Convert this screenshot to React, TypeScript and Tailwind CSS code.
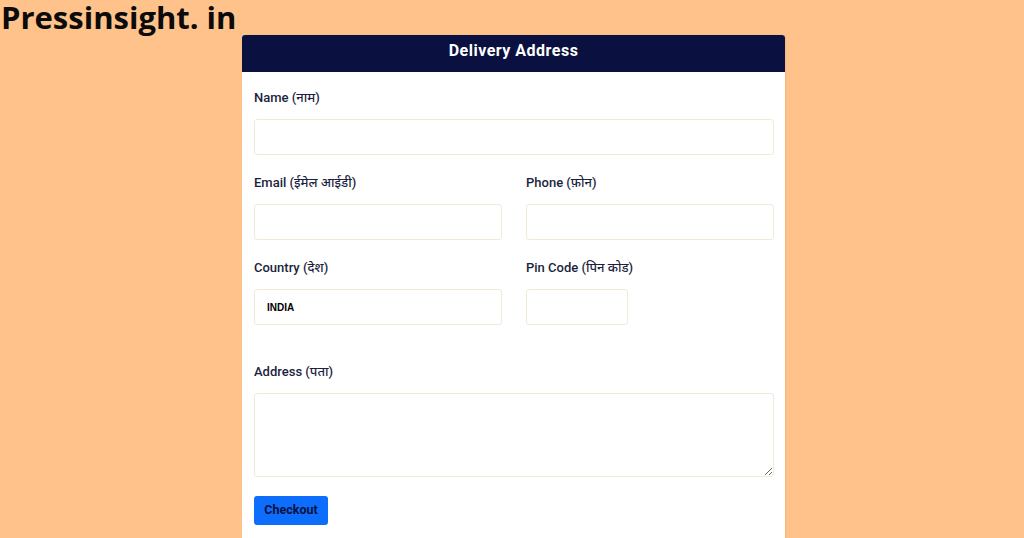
import React from "react";

const labelCls =
  "block h-5 leading-5 text-[13px] font-medium text-[#1c1f3d] font-['Roboto','Noto_Sans',sans-serif]";
const inputCls =
  "block h-9 w-full rounded-[3px] border border-[#f3ead6] bg-white px-3 outline-none";

const Field: React.FC<{ label: string; className?: string; children: React.ReactNode }> = ({
  label,
  className,
  children,
}) => (
  <div className={className}>
    <label className={labelCls}>{label}</label>
    <div className="mt-[11px]">{children}</div>
  </div>
);

const App: React.FC = () => {
  return (
    <div className="min-h-screen bg-[#ffc28a] overflow-hidden">
      <div className="h-[35px] pl-[1px] text-[31px] leading-[34px] font-bold text-[#0b0b0b] font-['Open_Sans',sans-serif] whitespace-nowrap">
        Pressinsight. in
      </div>

      <div className="ml-[242px] w-[543px] bg-white rounded-t-[3px] shadow-[1px_0_2px_rgba(0,0,0,0.06)] h-[510px]">
        <div className="h-[37px] pb-[5px] bg-[#0a1140] rounded-t-[3px] flex items-center justify-center text-white text-[16px] font-bold tracking-[0.5px] font-['Roboto',sans-serif]">
          Delivery Address
        </div>

        <div className="pl-3 pr-[11px] pt-4">
          <Field label="Name (नाम)">
            <input className={inputCls} />
          </Field>

          <div className="mt-[18px] grid grid-cols-2 gap-x-6">
            <Field label="Email (ईमेल आईडी)">
              <input className={inputCls} />
            </Field>
            <Field label="Phone (फ़ोन)">
              <input className={inputCls} />
            </Field>
          </div>

          <div className="mt-[18px] grid grid-cols-2 gap-x-6">
            <Field label="Country (देश)">
              <input
                className={`${inputCls} text-[10px] font-bold text-black font-['Liberation_Sans',sans-serif]`}
                defaultValue="INDIA"
              />
            </Field>
            <Field label="Pin Code (पिन कोड)">
              <input className={`${inputCls} !w-[102px]`} />
            </Field>
          </div>

          <Field label="Address (पता)" className="mt-[37px]">
            <textarea className="block h-[84px] w-full rounded-[3px] border border-[#f3ead6] bg-white px-3 py-2 outline-none" />
          </Field>

          <button className="mt-[19px] h-[29px] w-[74px] rounded-[3px] bg-[#0d6efd] text-[12.5px] font-bold text-[#0a1140] font-['Roboto',sans-serif]">
            Checkout
          </button>
        </div>
      </div>
    </div>
  );
};

export default App;
